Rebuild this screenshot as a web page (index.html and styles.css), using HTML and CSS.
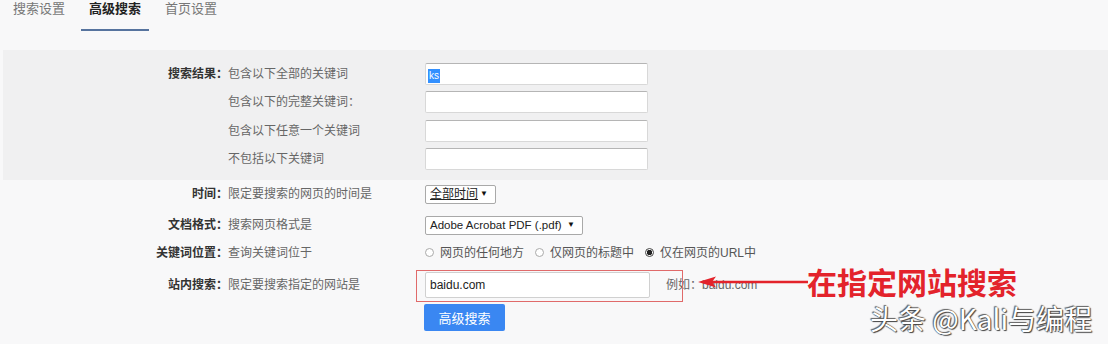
FILE: index.html
```html
<!DOCTYPE html>
<html lang="zh-CN">
<head>
  <meta charset="UTF-8" />
  <title>高级搜索</title>
  <link rel="stylesheet" href="styles.css">
</head>
<body>
  <div class="tabs">
    <span class="tab">搜索设置</span>
    <span class="tab active">高级搜索</span>
    <span class="tab">首页设置</span>
  </div>

  <div class="band">
    <div class="row">
      <span class="label">搜索结果：</span>
      <span class="desc">包含以下全部的关键词</span>
      <div class="field"><span class="sel">ks</span></div>
    </div>
    <div class="row">
      <span class="label"></span>
      <span class="desc">包含以下的完整关键词：</span>
      <div class="field"></div>
    </div>
    <div class="row">
      <span class="label"></span>
      <span class="desc">包含以下任意一个关键词</span>
      <div class="field"></div>
    </div>
    <div class="row">
      <span class="label"></span>
      <span class="desc">不包括以下关键词</span>
      <div class="field"></div>
    </div>
  </div>

  <div class="lower">
    <div class="row row-time">
      <span class="label">时间：</span>
      <span class="desc">限定要搜索的网页的时间是</span>
      <div class="select sel-time"><span class="focus">全部时间</span><span class="caret">▼</span></div>
    </div>
    <div class="row row-doc">
      <span class="label">文档格式：</span>
      <span class="desc">搜索网页格式是</span>
      <div class="select sel-doc"><span>Adobe Acrobat PDF (.pdf)</span><span class="caret">▼</span></div>
    </div>
    <div class="row row-radio">
      <span class="label">关键词位置：</span>
      <span class="desc">查询关键词位于</span>
      <label class="radio"><span class="dot"></span>网页的任何地方</label>
      <label class="radio"><span class="dot"></span>仅网页的标题中</label>
      <label class="radio"><span class="dot checked"></span>仅在网页的URL中</label>
    </div>
    <div class="row row-site">
      <span class="label">站内搜索：</span>
      <span class="desc">限定要搜索指定的网站是</span>
      <div class="field site">baidu.com</div>
      <span class="example">例如：baidu.com</span>
    </div>
    <div class="row row-btn">
      <button class="submit">高级搜索</button>
    </div>
  </div>

  <!-- annotation drawn over the screenshot -->
  <div class="annot-box"></div>
  <svg class="arrow" viewBox="0 0 110 14" width="110" height="14">
    <line x1="12" y1="7" x2="110" y2="7" stroke="#e3232b" stroke-width="2.5"/>
    <polygon points="0,7 18,1.5 14,7 18,12.5" fill="#e3232b"/>
  </svg>
  <div class="callout">在指定网站搜索</div>
  <div class="watermark">头条 @Kali与编程</div>
</body>
</html>
```

FILE: styles.css
```css
body {
  margin: 0;
  height: 344px;
  overflow: hidden;
  position: relative;
  background-color: #f8f8f9;
  color: #333;
  font-family: "Liberation Sans", "Noto Sans CJK SC", sans-serif;
  font-size: 12px;
  line-height: 16px;
}

.tabs {
  display: flex;
  gap: 8px;
  padding-left: 5px;
  height: 50px;
}
.tab {
  font-family: "Noto Sans CJK SC", sans-serif;
  font-size: 13px;
  line-height: 16px;
  height: 16px;
  padding: 0 8px 13px;
  border-bottom: 2px solid transparent;
  color: #777;
}
.tab.active {
  color: #222;
  font-weight: bold;
  border-bottom-color: #56739e;
}

.band {
  margin-left: 3px;
  background-color: #f0f0f1;
  padding: 12.5px 0 9.5px;
  display: flex;
  flex-direction: column;
  gap: 6.5px;
}
.band .row { margin-left: -3px; }

.row {
  display: flex;
  align-items: center;
  white-space: nowrap;
}
.label {
  flex: none;
  width: 228px;
  text-align: right;
  font-weight: bold;
  color: #333;
}
.desc {
  flex: none;
  width: 197px;
  color: #666;
}

.field {
  box-sizing: border-box;
  width: 223px;
  height: 22px;
  background-color: #fff;
  border: 1px solid #d8d8d8;
  border-top-color: #b5b5b5;
  border-radius: 2px;
  padding: 3px 2px;
}
.sel {
  display: inline-block;
  background-color: #3390ff;
  color: #fff;
  font-size: 10px;
  line-height: 14px;
  padding: 0 1px;
}

.lower { padding-top: 5px; }
.row-time { margin-bottom: 12px; }
.row-doc { margin-bottom: 10px; }
.row-radio { margin-bottom: 11px; height: 16px; }
.row-site { margin-bottom: 6px; }
.row-btn { padding-left: 424px; }

.select {
  flex: none;
  box-sizing: border-box;
  height: 19px;
  display: flex;
  align-items: center;
  justify-content: space-between;
  padding: 0 7px 0 4px;
  background-color: #fff;
  border: 1px solid #a9a9a9;
  border-radius: 2px;
  color: #222;
}
.sel-time { width: 71px; }
.sel-doc { width: 158px; font-size: 11.5px; }
.focus { text-decoration: underline; }
.caret { font-size: 8px; color: #111; }

.radio {
  display: flex;
  align-items: center;
  gap: 6px;
  margin-right: 11px;
  color: #555;
}
.dot {
  box-sizing: border-box;
  width: 9px;
  height: 9px;
  border: 1px solid #aaa;
  border-radius: 50%;
  background-color: #fff;
}
.dot.checked {
  border-color: #444;
  background: radial-gradient(circle, #222 0 2.5px, #fff 3px);
}

.field.site {
  flex: none;
  width: 225px;
  height: 26px;
  padding: 4px 4px;
  color: #222;
  border-color: #d0d0d0;
}
.example {
  margin-left: 16px;
  color: #666;
}

.submit {
  width: 81px;
  height: 27px;
  border: none;
  border-radius: 2px;
  background-color: #3a87f2;
  color: #fff;
  font-family: "Noto Sans CJK SC", sans-serif;
  font-size: 13px;
  padding: 0;
}

.annot-box {
  position: absolute;
  left: 416px;
  top: 270px;
  width: 267px;
  height: 32px;
  box-sizing: border-box;
  border: 1px solid #e06a6a;
}
.arrow {
  position: absolute;
  left: 698px;
  top: 275px;
}
.callout {
  position: absolute;
  left: 807px;
  top: 264px;
  font-family: "Noto Sans CJK SC", sans-serif;
  font-weight: bold;
  font-size: 30px;
  line-height: 34px;
  color: #e3232b;
}
.watermark {
  position: absolute;
  left: 870px;
  top: 300px;
  font-family: "Noto Sans CJK SC", sans-serif;
  font-size: 28px;
  line-height: 36px;
  color: #fff;
  text-shadow: 0 0 1px #333, 1px 1px 1px #444, -1px -1px 1px #666;
}
```
